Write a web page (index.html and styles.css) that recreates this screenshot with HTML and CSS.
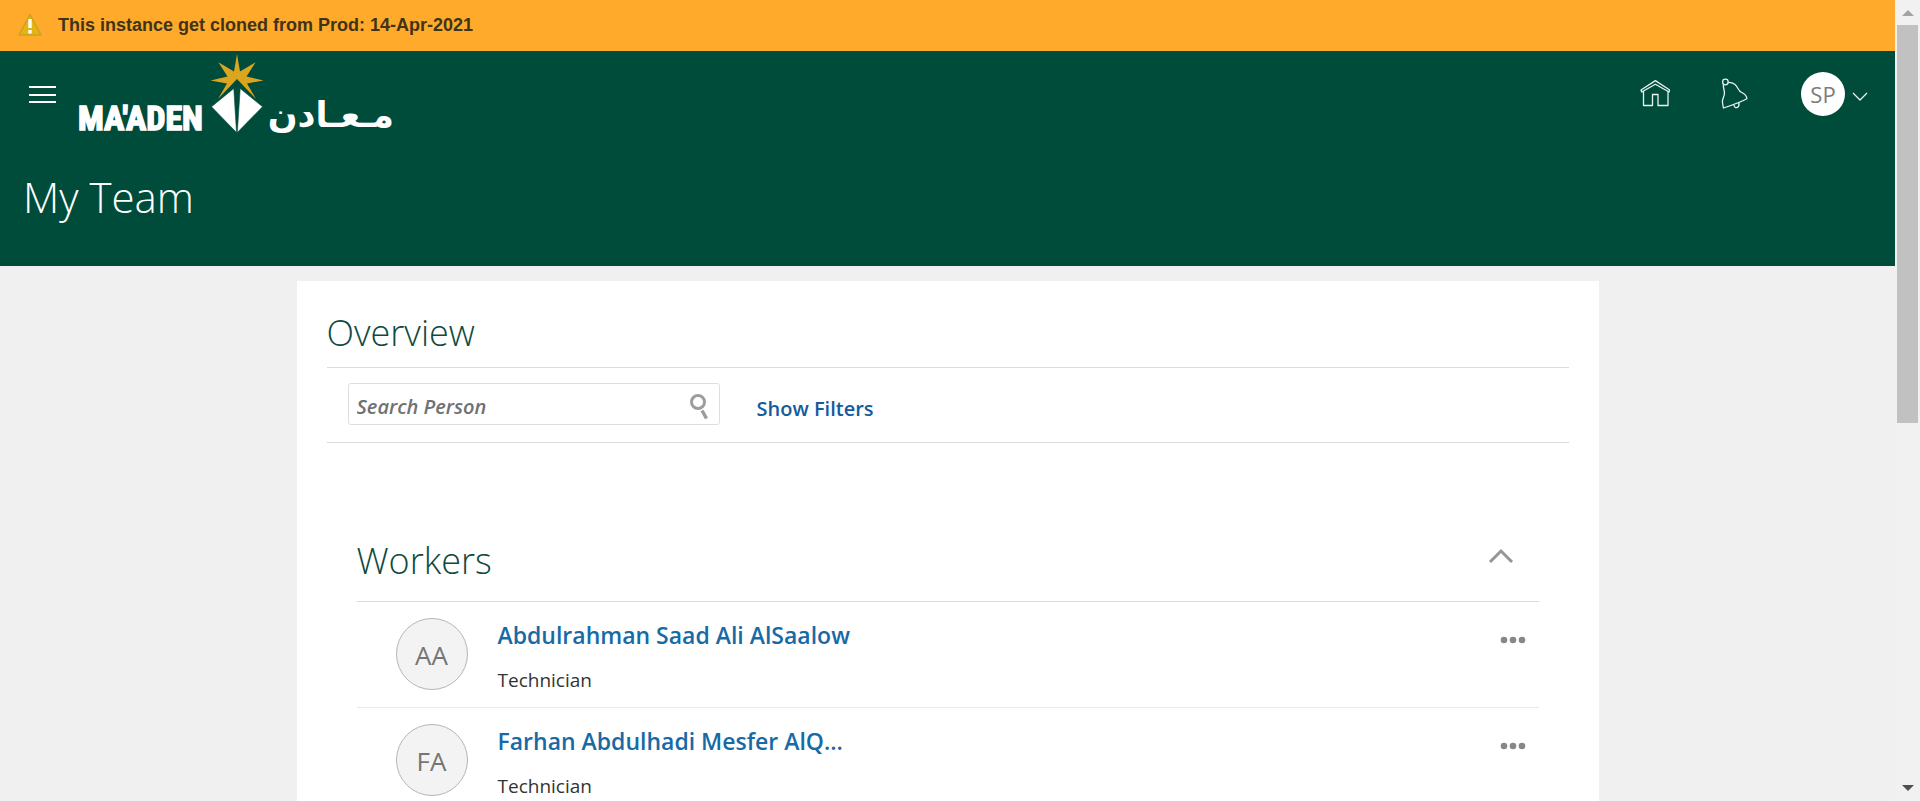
FILE: index.html
```html
<!DOCTYPE html>
<html lang="en">
<head>
<meta charset="utf-8">
<meta name="viewport" content="width=device-width, initial-scale=1">
<title>My Team</title>
<link rel="stylesheet" href="styles.css">
</head>
<body>
<div class="page">
  <div class="banner">
    <svg class="banner-icon" viewBox="0 0 24 24" aria-hidden="true">
      <path d="M12 1.500 23 22H1Z" fill="#e6b40f" stroke="#c9a227" stroke-width="1.500" stroke-linejoin="round"/>
      <path d="M12 6v9M12 17v3.500" stroke="#fff" stroke-width="3.400"/>
    </svg>
    <span>This instance get cloned from Prod: 14-Apr-2021</span>
  </div>
  <header class="header">
    <div class="topbar">
      <button class="icon-button menu" aria-label="Menu">
        <svg width="28" height="20" viewBox="0 0 28 20"><path d="M0 3h27M0 11h27M0 18h27" stroke="#fff" stroke-width="2"/></svg>
      </button>
      <a class="logo" href="#" aria-label="Ma'aden">
        <svg width="320" height="86" viewBox="77 52 320 86">
          <path fill="#dba520" d="M237 55 240 72.500 255.600 63.300 246.500 77.500 263.500 81.500 247 84.500 256 100 237 80 218 100 227 84.500 210.500 81.500 227.500 77.500 218.400 63.300 234 72.500Z"/>
          <path fill="#fff" stroke="#004c3b" stroke-width=".6" d="M211.500 107.700 233.800 89.500 236.500 133.500ZM240.200 89.500 262.500 107.700 237.300 133.500Z"/>
          <text class="logo-latin" x="78" y="131">MA'ADEN</text>
          <text class="logo-arabic" x="394" y="128" direction="rtl">مـعـادن</text>
        </svg>
      </a>
      <nav class="tools">
        <a class="tool" href="#" aria-label="Home">
          <svg width="30" height="30" viewBox="1640 79 30 30"><path d="m1641 90 14.400-9.400 14.300 9.400-.7 2-13.600-7.800-13.700 7.800Z M1643.500 91.500v14h9v-11h5.500v11h10v-14" class="line"/></svg>
        </a>
        <a class="tool bell" href="#" aria-label="Notifications">
          <svg width="30" height="32" viewBox="1720 77 30 32"><path d="M1723.400 83.500c-.5 3.500 1.500 6 1 9.500-.4 3-2.200 5-2 8l1 6c6-2 17.500-6 23.500-9.300-.4-5.200-4.500-5-7.200-7.700-2.500-2.500-3.200-9-12-8.500M1734 104c.5 4.500 5.500 3 5-2" class="line"/><circle cx="1725.400" cy="81" r="2.800" class="line"/></svg>
        </a>
        <button class="user" aria-label="Settings and actions">
          <span class="user-badge">SP</span>
          <svg class="user-arrow" width="16" height="10" viewBox="0 0 16 10"><path d="m1 1 7 7 7-7" class="line"/></svg>
        </button>
      </nav>
    </div>
    <h1 class="title">My Team</h1>
  </header>
  <main class="card">
    <h2 class="heading">Overview</h2>
    <form class="filters">
      <div class="search">
        <input class="search-input" type="text" placeholder="Search Person" aria-label="Search Person">
        <button class="icon-button find" type="button" aria-label="Search">
          <svg width="22" height="28" viewBox="0 0 22 28"><circle cx="9" cy="9" r="6.500" fill="none" stroke="#9c9e9e" stroke-width="3"/><path d="m13 17.500 4.500 8" stroke="#9c9e9e" stroke-width="3.500"/></svg>
        </button>
      </div>
      <a class="show-filters" href="#">Show Filters</a>
    </form>
    <section class="workers">
      <div class="workers-head">
        <h2 class="heading">Workers</h2>
        <button class="icon-button collapse" aria-label="Collapse Workers">
          <svg width="26" height="16" viewBox="0 0 26 16"><path d="m2 14 11-11 11 11" fill="none" stroke="#939696" stroke-width="3"/></svg>
        </button>
      </div>
      <ul class="list">
        <li class="worker">
          <span class="avatar">AA</span>
          <div class="details"><a class="name" href="#">Abdulrahman Saad Ali AlSaalow</a><span class="job">Technician</span></div>
          <button class="icon-button more" aria-label="Actions"><svg width="26" height="8" viewBox="0 0 26 8"><g fill="#858888"><circle cx="4" cy="4" r="3.300"/><circle cx="13" cy="4" r="3.300"/><circle cx="22" cy="4" r="3.300"/></g></svg></button>
        </li>
        <li class="worker">
          <span class="avatar">FA</span>
          <div class="details"><a class="name" href="#">Farhan Abdulhadi Mesfer AlQ...</a><span class="job">Technician</span></div>
          <button class="icon-button more" aria-label="Actions"><svg width="26" height="8" viewBox="0 0 26 8"><g fill="#858888"><circle cx="4" cy="4" r="3.300"/><circle cx="13" cy="4" r="3.300"/><circle cx="22" cy="4" r="3.300"/></g></svg></button>
        </li>
      </ul>
    </section>
  </main>
</div>
<div class="scrollbar" aria-hidden="true">
  <svg width="12" height="6" viewBox="0 0 12 6"><path d="M0 6 6 0l6 6Z" fill="#a3a3a3"/></svg>
  <div class="track"><div class="thumb"></div></div>
  <svg width="12" height="6" viewBox="0 0 12 6"><path d="M0 0h12L6 6Z" fill="#505050"/></svg>
</div>
</body>
</html>
```
FILE: styles.css
```css
* { box-sizing: border-box; }

body {
  margin: 0;
  height: 100vh;
  display: flex;
  overflow: hidden;
  background: #f0f0f0;
  font-family: "Open Sans", "Noto Sans", sans-serif;
  color: #333;
}

a { text-decoration: none; }
svg { display: block; }

.page {
  flex: 1;
  min-width: 0;
  overflow: hidden;
}

.icon-button {
  padding: 0;
  border: 0;
  background: none;
  cursor: pointer;
}

.line {
  fill: none;
  stroke: #e8f2ef;
  stroke-width: 1.3;
  stroke-linejoin: round;
}

.banner {
  display: flex;
  align-items: center;
  gap: 16px;
  height: 51px;
  padding: 0 18px 1px;
  background: #ffaa2b;
  color: #403418;
  font: bold 18px "Liberation Sans", Arial, sans-serif;
}

.banner-icon { width: 24px; height: 24px; }

.header {
  min-height: 215px;
  background: #004c3b;
  color: #fff;
}

.topbar {
  display: flex;
  align-items: center;
  height: 86px;
  padding: 0 27px 0 29px;
}

.logo { margin-left: 20px; }

.logo-latin {
  font: bold 34px "Roboto Condensed", Roboto, sans-serif;
  fill: #fff;
  stroke: #fff;
  stroke-width: 1.5;
}

.logo-arabic {
  font: bold 35px "DejaVu Sans", sans-serif;
  fill: #fff;
}

.tools {
  display: flex;
  align-items: center;
  margin-left: auto;
}

.bell { margin-left: 50px; }

.user {
  display: flex;
  align-items: center;
  gap: 7px;
  margin-left: 51px;
  padding: 0;
  border: 0;
  background: none;
  font-family: inherit;
}

.user-badge {
  width: 44px;
  height: 44px;
  border-radius: 50%;
  background: #fff;
  color: #7c7c7c;
  font-size: 22px;
  line-height: 44px;
}

.user-arrow { margin-top: 6px; }

.title {
  margin: 0;
  padding: 28px 23px 0;
  font-size: 42px;
  font-weight: 300;
  line-height: 64px;
}

.card {
  max-width: 1302px;
  min-height: 100vh;
  margin: 15px auto 0;
  padding: 30px;
  background: #fff;
}

.heading {
  margin: 0;
  color: #0f4a40;
  font-size: 36px;
  font-weight: 300;
  line-height: 44px;
}

.filters {
  display: flex;
  align-items: center;
  gap: 37px;
  height: 76px;
  margin-top: 12px;
  padding: 0 21px 2px;
  border: solid #d6dcdf;
  border-width: 1px 0;
}

.search {
  display: flex;
  align-items: center;
  width: 372px;
  height: 42px;
  padding: 0 8px;
  border: 1px solid #d9dfe3;
  border-radius: 3px;
}

.search-input {
  flex: 1;
  min-width: 0;
  padding: 4px 0 0;
  border: 0;
  outline: 0;
  background: none;
  font: italic 600 20px "Open Sans", sans-serif;
}

.search-input::placeholder { color: #6f7173; opacity: 1; }

.find { padding-top: 6px; }

.show-filters {
  padding-top: 9px;
  color: #145c9e;
  font-size: 20px;
  font-weight: 600;
}

.workers { padding: 96px 30px 0; }

.workers-head {
  display: flex;
  align-items: center;
  justify-content: space-between;
  padding: 0 25px 18px 0;
  border-bottom: 1px solid #d6dcdf;
}

.collapse { padding-bottom: 10px; }

.list {
  margin: 0;
  padding: 0;
  list-style: none;
}

.worker {
  display: flex;
  height: 106px;
  padding: 16px 13px 0 39px;
  border-bottom: 1px solid #e6eaec;
}

.avatar {
  width: 72px;
  height: 72px;
  border: 1px solid #b5b5b5;
  border-radius: 50%;
  background: #f3f3f3;
  color: #757575;
  font-size: 26px;
  line-height: 72px;
  text-align: center;
}

.details {
  display: flex;
  flex: 1;
  flex-direction: column;
  gap: 12px;
  margin-left: 30px;
}

.name {
  color: #176aa6;
  font-size: 23px;
  font-weight: 600;
  line-height: 34px;
}

.job {
  font-size: 19px;
  line-height: 32px;
}

.more { align-self: flex-start; padding-top: 18px; }

.scrollbar {
  display: flex;
  flex-direction: column;
  align-items: center;
  width: 25px;
  padding: 10px 0;
  background: #f1f1f1;
}

.track {
  flex: 1;
  width: 21px;
  margin: 9px 0;
}

.thumb {
  height: 53%;
  background: #c1c1c1;
}
```
